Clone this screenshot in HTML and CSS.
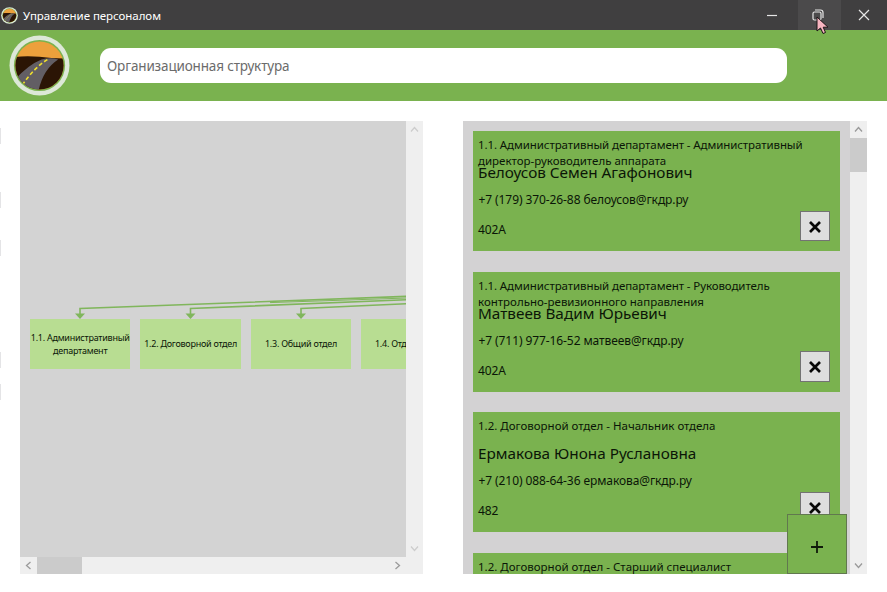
FILE: index.html
```html
<!DOCTYPE html>
<html lang="ru">
<head>
<meta charset="utf-8">
<title>Управление персоналом</title>
<link rel="stylesheet" href="styles.css">
</head>
<body>
<svg class="defs" width="0" height="0" aria-hidden="true">
  <symbol id="logo" viewBox="0 0 62 62">
    <clipPath id="disc"><circle cx="31" cy="31" r="24.5"/></clipPath>
    <circle cx="31" cy="31" r="30.5" fill="#dde8d8"/>
    <circle cx="31" cy="31" r="26" fill="#7ab24f"/>
    <g clip-path="url(#disc)">
      <rect width="62" height="62" fill="#eca03c"/>
      <path d="M0 23.5Q12 20.500 31 22Q46 24 62 24V62H0Z" fill="#2b1505"/>
      <path d="M50 25Q42 22.500 33 25Q18 31 2 50L12 62H29Q33 36 50 25Z" fill="#625e64"/>
      <path d="M39 25Q26 33 14 50" fill="none" stroke="#f0df2c" stroke-width="1.600" stroke-dasharray="4 2.500"/>
    </g>
  </symbol>
</svg>
<div class="window">
  <header class="titlebar">
    <svg class="app-icon"><use href="#logo"/></svg>
    <span class="app-title">Управление персоналом</span>
    <div class="controls">
      <div class="control"><svg width="12" height="12"><path d="M1 6.500H11"/></svg></div>
      <div class="control hover"><svg width="12" height="12"><rect x="1" y="3" width="8" height="8" rx="1.500"/><path d="M3 1H8.500Q11 1 11 3.500V9"/></svg></div>
      <div class="control"><svg width="12" height="12"><path d="M1 1L11 11M11 1L1 11"/></svg></div>
    </div>
  </header>
  <div class="toolbar">
    <svg class="logo"><use href="#logo"/></svg>
    <div class="search">Организационная структура</div>
  </div>
  <main class="content">
    <aside class="edge"><i></i><i></i><i></i><i></i><i></i></aside>
    <section class="chart">
      <div class="canvas">
        <svg class="links" width="387" height="30" viewBox="0 0 387 30">
          <g fill="none" stroke="#80b65c" stroke-width="1.600">
            <path d="M60 23V17.500L387 5.300"/>
            <path d="M170.500 23V17.500L387 8.700"/>
            <path d="M281 23V17.500L387 12.700"/>
            <path d="M250 11.600L387 7" stroke-width="1"/>
          </g>
          <g fill="#80b65c">
            <path d="M55 22.500H65L60 28Z"/><path d="M165.500 22.500H175.500L170.500 28Z"/><path d="M276 22.500H286L281 28Z"/>
          </g>
        </svg>
        <div class="nodes">
          <div class="node"><span class="n1">1.1. Административный<br>департамент</span></div>
          <div class="node"><span>1.2. Договорной отдел</span></div>
          <div class="node"><span>1.3. Общий отдел</span></div>
          <div class="node"><span>1.4. Отдел кадров</span></div>
        </div>
      </div>
      <div class="vbar idle">
        <svg class="arrow" viewBox="0 0 17 17"><path d="M5 10.500L8.500 6.500L12 10.500"/></svg>
        <svg class="arrow" viewBox="0 0 17 17"><path d="M5 6.500L8.500 10.500L12 6.500"/></svg>
      </div>
      <div class="hbar">
        <svg class="arrow" viewBox="0 0 17 17"><path d="M10.500 5L6.500 8.500L10.500 12"/></svg>
        <div class="hthumb"></div>
        <svg class="arrow" viewBox="0 0 17 17"><path d="M6.500 5L10.500 8.500L6.500 12"/></svg>
      </div>
      <div class="corner"></div>
    </section>
    <section class="people">
      <div class="list">
        <article class="card">
          <div class="post"><span class="tight">1.1. Административный департамент - Административный</span><br>директор-руководитель аппарата</div>
          <div class="name">Белоусов Семен Агафонович</div>
          <div class="contact">+7 (179) 370-26-88 белоусов@гкдр.ру</div>
          <div class="room">402A</div>
          <div class="remove"><svg width="14" height="14"><path d="M2 2L12 12M12 2L2 12"/></svg></div>
        </article>
        <article class="card">
          <div class="post"><span class="tight">1.1. Административный департамент - Руководитель</span><br>контрольно-ревизионного направления</div>
          <div class="name">Матвеев Вадим Юрьевич</div>
          <div class="contact">+7 (711) 977-16-52 матвеев@гкдр.ру</div>
          <div class="room">402A</div>
          <div class="remove"><svg width="14" height="14"><path d="M2 2L12 12M12 2L2 12"/></svg></div>
        </article>
        <article class="card">
          <div class="post">1.2. Договорной отдел - Начальник отдела</div>
          <div class="name">Ермакова Юнона Руслановна</div>
          <div class="contact">+7 (210) 088-64-36 ермакова@гкдр.ру</div>
          <div class="room">482</div>
          <div class="remove"><svg width="14" height="14"><path d="M2 2L12 12M12 2L2 12"/></svg></div>
        </article>
        <article class="card">
          <div class="post">1.2. Договорной отдел - Старший специалист</div>
        </article>
      </div>
      <div class="vbar">
        <svg class="arrow" viewBox="0 0 17 17"><path d="M5 10.500L8.500 6.500L12 10.500"/></svg>
        <div class="vthumb"></div>
        <svg class="arrow" viewBox="0 0 17 17"><path d="M5 6.500L8.500 10.500L12 6.500"/></svg>
      </div>
      <div class="add"><svg width="12" height="12"><path d="M0 6H12M6 0V12"/></svg></div>
    </section>
  </main>
  <svg class="cursor" viewBox="0 0 13 19"><path d="M1 1V15L4.500 12L7 17.500L9.500 16.500L7.200 11.200H12Z" fill="#f7b4c0" stroke="#1c1416" stroke-width="1"/></svg>
</div>
</body>
</html>
```
FILE: styles.css
```css
* { box-sizing: border-box; }
body { margin: 0; background: #fff; font-family: "Noto Sans", "Open Sans", sans-serif; color: #0b1607; }
svg { display: block; }
.defs { position: absolute; }
.window { position: relative; width: 887px; height: 592px; overflow: hidden; display: flex; flex-direction: column; }

.titlebar { height: 30px; flex: none; background: #403f40; display: flex; align-items: center; color: #fff; }
.app-icon { width: 17px; height: 17px; margin-left: 1px; }
.app-title { font-size: 11.5px; letter-spacing: -0.05px; margin-left: 5px; white-space: nowrap; }
.controls { display: flex; margin-left: auto; height: 30px; }
.control { width: 46px; display: flex; align-items: center; justify-content: center; }
.control:nth-child(2) { width: 43px; margin-left: 3px; padding-right: 3px; }
.control.hover { background: #4b4a4b; }
.control svg { fill: none; stroke: #e6e6e6; stroke-width: 1.2; }

.toolbar { height: 70.5px; flex: none; background: #7ab24f; display: flex; align-items: center; }
.logo { width: 61px; height: 61px; margin-left: 9px; }
.search { width: 687.5px; height: 35.5px; margin-left: 29.5px; padding-left: 7.5px; border-radius: 11px; background: #fff; color: #6b6b6b; font-size: 13.5px; letter-spacing: -0.16px; line-height: 37.5px; white-space: nowrap; }

.content { flex: 1; display: flex; align-items: flex-start; padding-top: 20.5px; }
.edge { width: 19.5px; padding-top: 7px; display: flex; flex-direction: column; }
.edge i { width: 1px; height: 16px; background: #e4e4e6; }
.edge i:nth-child(2) { margin-top: 48px; }
.edge i:nth-child(3) { margin-top: 32px; }
.edge i:nth-child(4) { margin-top: 96px; }
.edge i:nth-child(5) { margin-top: 16px; }

.chart { width: 403.5px; height: 452.5px; display: grid; grid-template: 435.5px 17px / 386.5px 17px; }
.canvas { background: #d3d3d3; overflow: hidden; padding-top: 170px; }
.nodes { display: flex; gap: 10px; padding-left: 10.5px; margin-top: -2px; }
.node { flex: none; width: 100.4px; height: 50px; background: #b8dd92; display: flex; align-items: center; justify-content: center; text-align: center; font-size: 9px; letter-spacing: -0.25px; line-height: 12.5px; white-space: nowrap; padding-top: 1px; }
.corner { background: #efefef; }

.vbar { width: 17px; background: #efefef; display: flex; flex-direction: column; }
.hbar { height: 17px; background: #efefef; display: flex; }
.arrow { width: 17px; height: 17px; flex: none; fill: none; stroke: #9a9a9a; stroke-width: 1.3; }
.arrow:last-child { margin-top: auto; }
.hbar .arrow:last-child { margin-top: 0; margin-left: auto; }
.idle .arrow { stroke: #cdcdcd; }
.hthumb { width: 45px; background: #cbcbcb; }
.vthumb { height: 34px; background: #cbcbcb; }

.people { position: relative; width: 404px; height: 452.5px; margin-left: 40px; display: flex; }
.list { width: 387px; background: #d3d2d3; padding: 10px 10px 0; overflow: hidden; display: flex; flex-direction: column; gap: 20.300px; }
.card { position: relative; flex: none; height: 120.3px; background: #7ab24f; padding-left: 5px; display: grid; grid-template-rows: repeat(4, 30px); white-space: nowrap; font-size: 11.5px; line-height: 16px; }
.post { padding-top: 6px; }
.tight { letter-spacing: -0.09px; }
.name { font-size: 15.3px; line-height: 22px; }
.contact, .room { font-size: 12px; letter-spacing: -0.09px; padding-top: 1px; }
.contact { padding-left: 0.500px; }
.remove { position: absolute; right: 10px; bottom: 10px; width: 30.5px; height: 30.5px; background: #dedede; border: 1px solid #737373; display: flex; align-items: center; justify-content: center; padding-top: 1px; }
.remove svg { fill: none; stroke: #080808; stroke-width: 2.7; }
.add { position: absolute; left: 324px; bottom: 0; width: 60px; height: 60px; background: #7ab24f; border: 1px solid #61784f; display: flex; align-items: center; justify-content: center; padding-top: 6px; }
.add svg { stroke: #101a0a; stroke-width: 1.8; }
.cursor { position: absolute; left: 815.5px; top: 15.5px; width: 13px; height: 19px; }
```
